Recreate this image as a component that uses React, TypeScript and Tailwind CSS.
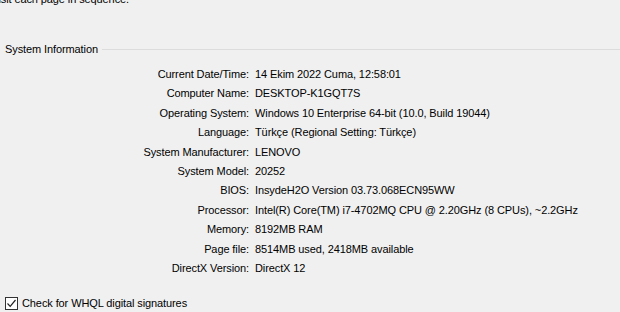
const ROWS: [string, string][] = [
  ["Current Date/Time:", "14 Ekim 2022 Cuma, 12:58:01"],
  ["Computer Name:", "DESKTOP-K1GQT7S"],
  ["Operating System:", "Windows 10 Enterprise 64-bit (10.0, Build 19044)"],
  ["Language:", "Türkçe (Regional Setting: Türkçe)"],
  ["System Manufacturer:", "LENOVO"],
  ["System Model:", "20252"],
  ["BIOS:", "InsydeH2O Version 03.73.068ECN95WW"],
  ["Processor:", "Intel(R) Core(TM) i7-4702MQ CPU @ 2.20GHz (8 CPUs), ~2.2GHz"],
  ["Memory:", "8192MB RAM"],
  ["Page file:", "8514MB used, 2418MB available"],
  ["DirectX Version:", "DirectX 12"],
];

export default function App() {
  return (
    <div
      className="w-[620px] h-[312px] overflow-hidden bg-[#f0f0f0] text-black text-[11px] leading-[15px] tracking-[-0.1px]"
      style={{ fontFamily: '"Liberation Sans", Arial, sans-serif' }}
    >
      {/* intro text, cut off by the window edge */}
      <p className="-mt-[8px] -ml-[7px] whitespace-nowrap">visit each page in sequence.</p>

      {/* group box header */}
      <div className="mt-[35px] flex items-center">
        <span className="pl-[5px] pr-[4px]">System Information</span>
        <div className="flex-1 h-px bg-[#dcdcdc]" />
      </div>

      {/* label/value rows */}
      <div className="mt-[10px] grid grid-cols-[249px_1fr] gap-x-[6px] gap-y-[4.4px]">
        {ROWS.map(([label, value]) => (
          <div key={label} className="contents">
            <div className="text-right whitespace-nowrap">{label}</div>
            <div className="whitespace-nowrap">{value}</div>
          </div>
        ))}
      </div>

      {/* checkbox */}
      <div className="mt-[20px] ml-[5px] flex items-center gap-[4px]">
        <div className="w-[13px] h-[13px] border border-[#333] bg-white flex items-center justify-center">
          <svg width="11" height="11" viewBox="0 0 11 11">
            <path d="M1.5 5.5 L4.2 8.3 L9.5 2" fill="none" stroke="#222" strokeWidth="1.2" />
          </svg>
        </div>
        <span>Check for WHQL digital signatures</span>
      </div>
    </div>
  );
}
